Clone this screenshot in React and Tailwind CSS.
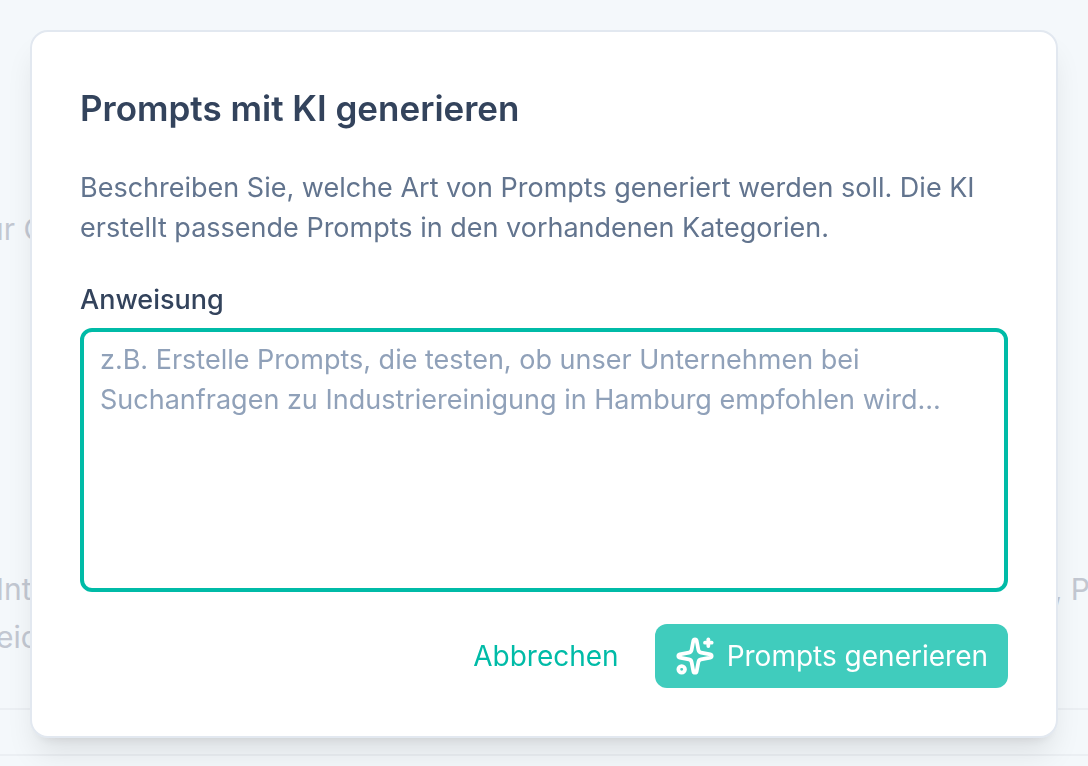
import React, { useState } from 'react';
import { Sparkles } from 'lucide-react';

function PageBehind() {
  return (
    <main
      aria-hidden="true"
      className="min-h-screen overflow-hidden text-[30px] leading-[48px] text-[#c2c7d1]"
    >
      <p className="-ml-3.5 pt-[205px]">ur C</p>
      <div className="mt-[312px] flex justify-between">
        <p className="-ml-1">
          Int
          <br />
          eic
        </p>
        <p className="-mr-0.5">, P</p>
      </div>
      <div className="mt-[47px] h-12 border-y-2 border-[#ebeff3]" />
    </main>
  );
}

function PromptDialog() {
  const [instruction, setInstruction] = useState('');

  return (
    <div className="fixed inset-0 flex items-start justify-center p-[30px]">
      <form
        role="dialog"
        aria-labelledby="dialog-title"
        onSubmit={(e) => e.preventDefault()}
        className="flex w-full flex-col gap-8 rounded-[18px] border-2 border-slate-200 bg-white p-12 shadow-[0_20px_30px_-6px_rgba(0,0,0,0.1),0_8px_12px_-8px_rgba(0,0,0,0.1)]"
      >
        <h2 id="dialog-title" className="text-[35px] leading-[56px] font-semibold text-[#33435c]">
          Prompts mit KI generieren
        </h2>

        <p className="text-[27px] leading-10 text-slate-500">
          Beschreiben Sie, welche Art von Prompts generiert werden soll. Die KI erstellt passende
          Prompts in den vorhandenen Kategorien.
        </p>

        <div className="flex flex-col gap-2">
          <label htmlFor="instruction" className="text-[27px] leading-10 font-medium text-[#33435c]">
            Anweisung
          </label>
          <textarea
            id="instruction"
            value={instruction}
            onChange={(e) => setInstruction(e.target.value)}
            placeholder="z.B. Erstelle Prompts, die testen, ob unser Unternehmen bei Suchanfragen zu Industriereinigung in Hamburg empfohlen wird..."
            className="h-66 w-full resize-none rounded-xl border-4 border-[#00bba7] bg-white px-4 py-2 text-[27px] leading-10 text-[#33435c] outline-none placeholder:text-[#90a1b9]"
          />
        </div>

        <div className="flex justify-end gap-4 text-[28px] leading-10">
          <button type="button" className="rounded-xl px-5 py-3 text-[#00bba7]">
            Abbrechen
          </button>
          <button
            type="submit"
            className="flex items-center gap-3 rounded-xl bg-[#40ccbd] px-5 py-3 text-white"
          >
            <Sparkles size={40} strokeWidth={2.25} />
            Prompts generieren
          </button>
        </div>
      </form>
    </div>
  );
}

export default function App() {
  return (
    <div className="min-h-screen bg-[#f4f8fb] font-['Inter','Liberation_Sans',sans-serif]">
      <PageBehind />
      <PromptDialog />
    </div>
  );
}
